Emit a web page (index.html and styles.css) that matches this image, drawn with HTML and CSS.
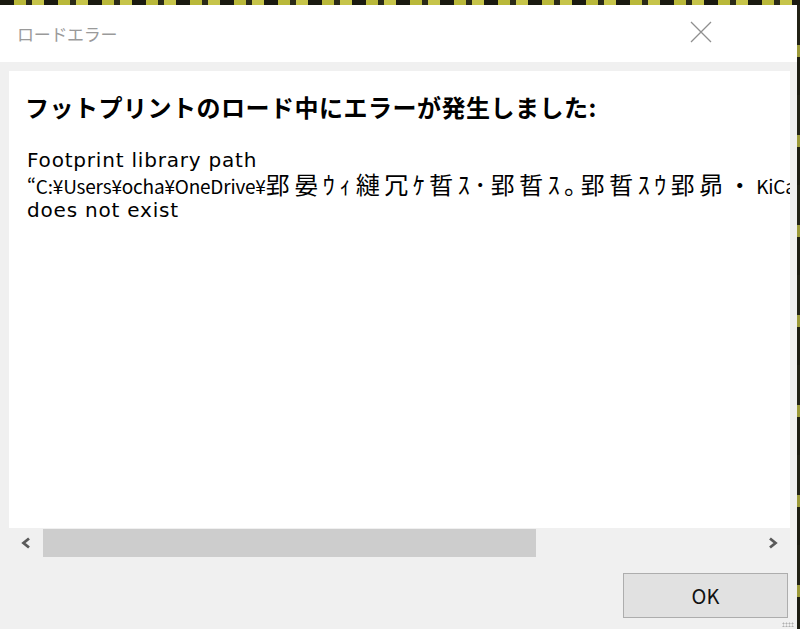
FILE: index.html
```html
<!DOCTYPE html>
<html lang="ja">
<head>
<meta charset="utf-8">
<title>ロードエラー</title>
<link rel="stylesheet" href="styles.css">
</head>
<body>
<div class="screen">
  <div class="desk-top"></div>
  <div class="row">
    <div class="window">
      <div class="titlebar">
        <span class="title">ロードエラー</span>
        <span class="close">
          <svg width="22" height="22" viewBox="0 0 22 22"><path d="M1 1 L21 21 M21 1 L1 21" stroke="#8f8f8f" stroke-width="1.3" fill="none"/></svg>
        </span>
      </div>
      <div class="client">
        <div class="panel">
          <div class="heading">フットプリントのロード中にエラーが発生しました:</div>
          <div class="msg">
            <div class="line">Footprint library path</div>
            <div class="line"><span class="path">“C:¥Users¥ocha¥OneDrive¥</span><span class="jp">郢晏ｳｨ縺冗ｹ晢ｽ･郢晢ｽ｡郢晢ｽｳ郢昴・</span><span class="path">KiCad¥footprints”</span></div>
            <div class="line">does not exist</div>
          </div>
        </div>
        <div class="hscroll">
          <span class="arrow">
            <svg width="12" height="12" viewBox="0 0 12 12"><path d="M9 1.5 L3.5 6 L9 10.5" stroke="#5a5a5a" stroke-width="2.8" fill="none"/></svg>
          </span>
          <div class="track"><div class="thumb"></div></div>
          <span class="arrow">
            <svg width="12" height="12" viewBox="0 0 12 12"><path d="M3 1.5 L8.5 6 L3 10.5" stroke="#5a5a5a" stroke-width="2.8" fill="none"/></svg>
          </span>
        </div>
        <div class="footer">
          <button class="ok">OK</button>
        </div>
        <div class="grip"></div>
      </div>
    </div>
    <div class="desk-right"></div>
  </div>
</div>
</body>
</html>
```

FILE: styles.css
```css
html, body {
  margin: 0;
  padding: 0;
}
body {
  width: 800px;
  height: 629px;
  overflow: hidden;
  background: #f0f0f0;
  font-family: "Noto Sans CJK JP", "Noto Sans", sans-serif;
}
.screen {
  display: flex;
  flex-direction: column;
  width: 800px;
  height: 629px;
}
.desk-top {
  height: 5px;
  flex: none;
  background: repeating-linear-gradient(90deg, #1a1a10 0 14px, #b9b83a 14px 26px, #2a2a18 26px 32px, #c6c44a 32px 44px);
}
.row {
  flex: 1;
  display: flex;
  min-height: 0;
}
.window {
  flex: 1;
  display: flex;
  flex-direction: column;
  background: #f0f0f0;
  min-width: 0;
}
.desk-right {
  width: 3px;
  flex: none;
  background: repeating-linear-gradient(180deg, #222216 0 40px, #9c9a3a 40px 52px, #1c1c12 52px 90px);
}
.titlebar {
  height: 57px;
  flex: none;
  background: #ffffff;
  display: flex;
  align-items: center;
  justify-content: space-between;
  padding: 0 85px 0 17px;
}
.title {
  font-size: 17px;
  color: #9a9a9a;
  letter-spacing: -0.3px;
}
.close {
  display: flex;
  margin-top: -3px;
}
.client {
  flex: 1;
  display: flex;
  flex-direction: column;
  padding: 9px 7px 0 9px;
  position: relative;
}
.panel {
  height: 457px;
  background: #ffffff;
  overflow: hidden;
  padding: 20px 0 0 16px;
  box-sizing: border-box;
}
.heading {
  font-size: 24px;
  font-weight: 700;
  color: #000;
  white-space: nowrap;
  letter-spacing: 0.5px;
  line-height: 32px;
}
.msg {
  margin-top: 25px;
  padding-left: 2px;
  font-family: "DejaVu Sans", "Noto Sans CJK JP", sans-serif;
  font-size: 20px;
  letter-spacing: 0.8px;
  line-height: 25px;
  color: #000;
}
.path {
  font-family: "Noto Sans CJK JP", sans-serif;
  font-size: 19px;
  letter-spacing: -0.2px;
}
.jp {
  font-family: "Noto Sans CJK JP", sans-serif;
  font-size: 24px;
  letter-spacing: 4.5px;
  line-height: 20px;
}
.line {
  white-space: nowrap;
  height: 25px;
}
.hscroll {
  height: 30px;
  flex: none;
  display: flex;
  align-items: stretch;
  background: #f0f0f0;
}
.arrow {
  width: 34px;
  flex: none;
  display: flex;
  align-items: center;
  justify-content: center;
}
.track {
  flex: 1;
  display: flex;
  align-items: stretch;
  padding: 1px 0;
}
.thumb {
  width: 493px;
  background: #cdcdcd;
}
.footer {
  display: flex;
  justify-content: flex-end;
  padding: 15px 2px 0 0;
}
.ok {
  width: 165px;
  height: 45px;
  background: #e1e1e1;
  border: 1px solid #adadad;
  font-family: "Noto Sans CJK JP", "Noto Sans", sans-serif;
  font-size: 20px;
  color: #111;
  padding: 0;
}
.grip {
  position: absolute;
  right: 3px;
  bottom: 2px;
  width: 12px;
  height: 5px;
  background: radial-gradient(circle, #b0b0b0 0.8px, transparent 1.2px) 0 0 / 3px 3px;
}
```
